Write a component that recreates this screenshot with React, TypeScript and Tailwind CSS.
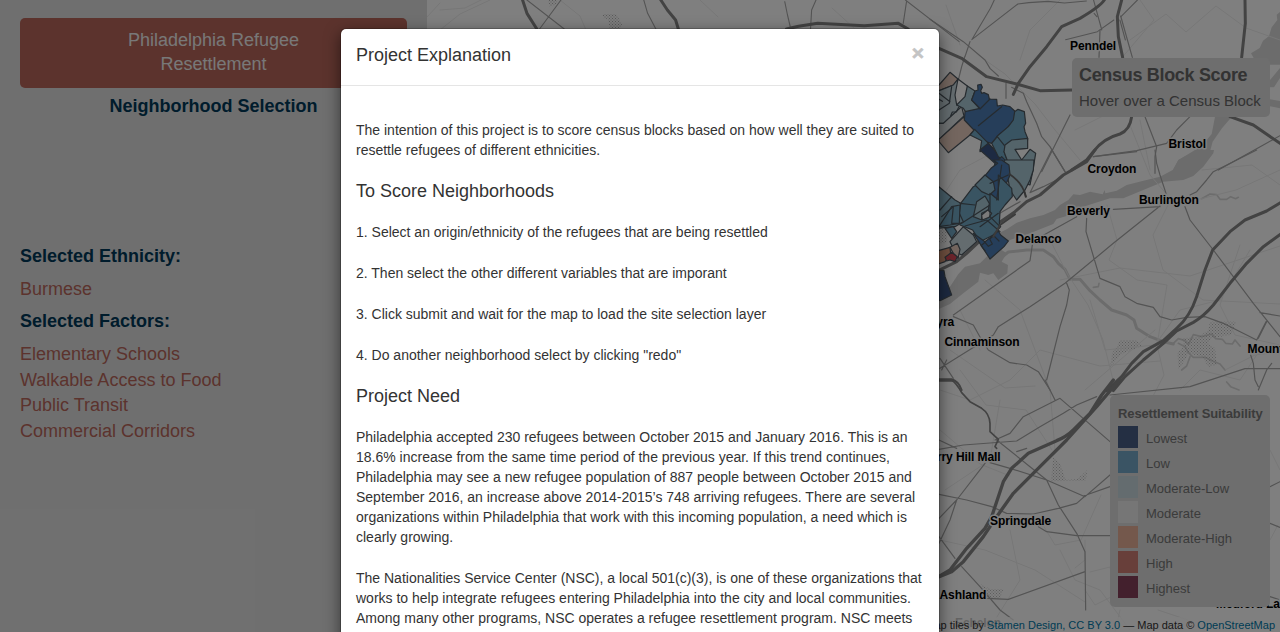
import React from "react";

const factors = ["Elementary Schools", "Walkable Access to Food", "Public Transit", "Commercial Corridors"];

const legend = [
  { label: "Lowest", swatch: "bg-[#485f87]" },
  { label: "Low", swatch: "bg-[#75a9c8]" },
  { label: "Moderate-Low", swatch: "bg-[#c8d8de]" },
  { label: "Moderate", swatch: "bg-[#ececec]" },
  { label: "Moderate-High", swatch: "bg-[#e8b099]" },
  { label: "High", swatch: "bg-[#d07f75]" },
  { label: "Highest", swatch: "bg-[#87405a]" },
];

const places: [string, number, number][] = [
  ["Penndel", 1070, 50],
  ["Bristol", 1168.5, 148],
  ["Croydon", 1087.5, 173],
  ["Burlington", 1139, 204],
  ["Beverly", 1067, 215],
  ["Delanco", 1015.5, 243],
  ["Palmyra", 908, 326],
  ["Cinnaminson", 944.5, 346],
  ["Mount Holly", 1247.5, 353],
  ["Cherry Hill Mall", 914.5, 461],
  ["Springdale", 990, 524.5],
  ["Ashland", 939.5, 599],
  ["Medford Lakes", 1216, 608],
];

const BLUE = "#4c7cb4";
const NAVY = "#3a5484";
const TEAL = "#72a8c4";
const MID = "#8cb8cc";
const LIGHT = "#a8c8d4";
const PALE = "#c8d8de";
const PEACH = "#e8ccbe";

function MapArt() {
  return (
    <svg className="block h-full w-full" viewBox="427 0 853 632" fill="none" strokeLinejoin="round" strokeLinecap="round">
      <defs>
        <pattern id="dots" width="9" height="9" patternUnits="userSpaceOnUse">
          <rect x="0" y="0" width="3" height="3" fill="#bcbcbc" />
          <rect x="4.5" y="4.5" width="3" height="3" fill="#bcbcbc" />
        </pattern>
        <pattern id="dotsSmall" width="3" height="3" patternUnits="userSpaceOnUse">
          <rect x="0" y="0" width="1" height="1" fill="#b4b4b4" />
          <rect x="1.5" y="1.5" width="1" height="1" fill="#b4b4b4" />
        </pattern>
      </defs>
      {/* water */}
      <g fill="#d9d9d9">
        <g transform="translate(930 0) scale(.33333)">
          <path d="M1050 36l-10 8 2 16-17 22-8 26-18 14-10 22-26 16 8 14 4 20h75zM1020 240l12-14 18-22v30l-18 28h-12zM1020 298l30 5v22l-30-6z" />
          <path d="M856 345L845 402 822 430 792 455 745 480 728 515 800 512 838 462 848 425 876 385 910 345z" />
        </g>
        <g transform="translate(930 150) scale(.33333)">
          <path d="M795 0L745 30 728 60 690 80 640 92 590 105 560 122 526 130 524 120 518 133 480 125 450 135 430 133 415 150 390 165 375 180 340 195 300 205 260 218 230 238 195 255 190 300 150 340 105 350 85 372 60 410 20 425V480L60 462 100 430 145 395 150 368 175 375 190 370 205 390 232 370 234 345 215 335 230 310 215 300 240 270 300 250 370 222 380 207 420 195 460 170 540 145 580 145 640 120 700 95 760 90 790 78 820 50 850 10 852 0z" />
        </g>
      </g>
      <g transform="translate(930 150) scale(.33333)" stroke="#d9d9d9">
        <path strokeWidth="9" d="M215 322L235 306 290 300 340 300 370 320 385 340 405 358 420 388 450 388 465 405 480 422 510 450 545 480 590 495 612 510 620 535 660 560 700 575 730 582" />
        <path strokeWidth="5" d="M730 580l15-14 20 6 10 12 15-30 25 6 30-8 12 14 20 2 10 12 20 2 8-12 15 18M745 580l20 10 10 18 15 14 35 0 25 12 20 8 15 18M780 620l-10 28-15 12M815 146l25-14 20 2 10 14 20 0 12-8 15 6 8-4M490 412l15-2 2-10M890 696l12 14 25 10" />
      </g>
      {/* wetlands */}
      <g fill="url(#dots)">
        <path transform="translate(930 150) scale(.33333)" d="M840 515h78l-15 40-60 10-8 18 20 10 5 52-24 5-20-30-40-10-30 50-4-50 20-20-5-25 50-5 28-20zM572 570h45l22 18-50 18-18 10-30 35 5-40z" />
        <path transform="translate(930 380) scale(.33333)" d="M370 232l22 22 15 46 35-2 30-28-5 32-105 2zM150 612l30 15h40l-10 30h-35z" />
        <path transform="translate(930 160) scale(.33333)" d="M27 205c25 5 30 25 20 45h-20z" />
      </g>
      <path fill="url(#dotsSmall)" d="M603 14h13l6 10-2 5h-10l-2-10-5-1zM548 0h10l-3 5-5 2z" />
      {/* local roads */}
      <g stroke="#eeeeee" strokeWidth="1">
        <path d="M427 17l13-14M440 10l25-2 20-10M440 30l20-16 30-14M560 0l20 16 6 14M700 0l18 17M832 8l22 20M960 45l-14-40M1060 0l-30 30-10 30M1130 40l36-26 20 18 30-26 30 22 34 12M1120 60l34-40-14-20M985 60l20 14 30 30 20 26 25 30M1075 130l40-20M1130 125l20 50 26 30 60-15 44-20M940 200l20-30 34-18M960 310l20 40M985 280l35 30 30 80 5 60M1050 240l18 35 20 30 15 35 10 40M1107 205l10 35-8 20 28 20 30 5-10 60 7 30-13 25M1168 205l-15 30 10 35 40 30 77 4M1060 280l60-12 70 8 90-30M1090 300l15 50 50-5 25-35 40-10 30-50M1240 245l-20 60 15 30 45 10M940 390l30 10 40-20 30-30 60 16 60-5M960 370l26 35 40 5 26 40M1000 400l-10 60-45 30M940 540l45 10 50 20 50 32M1010 530l10 50-25 40M1040 520l15 25 26-5 20-45M1060 550l15 30 25 10 30 40M1085 540v20l-10 8M940 430l40 34 30 12M1090 572l20-5 5 28-20 10-10-15M1270 450l10 20M1270 540l8-15M1180 390l20-20 40 10 20-30M1225 370l30-15 25-3M950 350l55 38 30-2M1150 170l-10-50M1202 170l50-5 28 20M1155 330l-70 60M1188 620l-30-10M1120 610l-5 22" />
      </g>
      {/* secondary roads */}
      <g stroke="#a8a8a8" strokeWidth="1.1">
        <g transform="translate(420 0) scale(.5485 .33333)">
          <path vectorEffect="non-scaling-stroke" d="M195 0l68 87M257 0L218 87M408 0l7 40 15 47M665 5l5 40 6 42M722 0l-8 30-2 57M885 0l98 125M887 5l-6 65M1047 0l-7 25-20 55-14 39 84-107 20-4 35-4 30 5 40-6M1229 40l5 10M1228 0l15 90M1265 60l-30 35-58 24M1308 0l-30 50M1276 60l10 60" />
        </g>
        <g transform="translate(930 0) scale(.33333)" strokeWidth="3.6">
          <path d="M105 168L95 200 85 240M0 58L100 125 165 180 180 205 205 228M120 125L105 170M510 90L507 172M572 48L607 172M228 250v45M245 262L280 280 290 305 320 370 335 410 360 440 405 515M420 345L335 515M645 350L680 440 675 470V520M780 350L740 390 710 430 620 452 490 470M865 510L1000 435 1050 407" />
        </g>
        <g transform="translate(930 150) scale(.33333)" strokeWidth="3.6">
          <path d="M490 20L620 5M365 0L300 128 340 110 380 90M365 0L405 65M675 0L680 40 690 75 708 130M980 0L850 65 830 90 800 125 780 135M550 178L690 170M690 168L550 280 405 400 300 470 205 530 190 555 30 655M765 170L780 210 850 300 970 460 1050 560M470 205L468 245 510 385 570 410 585 440 620 460 670 472 690 500 725 510 770 502 825 500 880 520 920 540 980 570 1008 515M410 400L418 420 410 465 390 530 350 690M307 285L300 332 70 495M440 200L305 275M70 500L130 525 155 570 175 600 240 638 290 645 325 665 360 720M1050 498L990 488M1010 515L985 565M962 615L970 640 975 690 985 710M1025 640L1010 660 985 720M1050 656H945L780 710 540 735M200 195L270 155M30 625L70 685M50 630L35 660" />
        </g>
        <g transform="translate(930 380) scale(.33333)" strokeWidth="3.6">
          <path d="M27 208L100 195 260 183 330 140 400 100 440 75 500 50M27 180L80 205M345 0L375 60M195 180L240 160 280 110 390 55 540 185M200 180L300 260 350 300 385 375 440 460 465 515 467 690M180 248L240 265 350 300 460 348 540 320M465 350L540 285M27 415L80 360 165 250M27 343L110 360 185 380 230 400 310 402 385 385 440 370 465 348M80 360L60 420 27 490M325 440L350 455 440 467 540 467M27 470L75 535M95 560L150 620 210 690 250 720M170 655L235 658 465 575M1020 430L1050 442M1020 320L1050 305M1020 650L1050 660M260 215L290 205M150 655H27" />
        </g>
      </g>
      {/* highways */}
      <g stroke="#868686" strokeWidth="3">
        <g transform="translate(420 0) scale(.5485 .33333)">
          <path vectorEffect="non-scaling-stroke" d="M187 0l8 40 18 47M439 0l12 30 15 30 5 27M668 87l22-8 35-9 85 7 62-7 18 17" />
        </g>
        <g transform="translate(930 0) scale(.33333)" strokeWidth="9">
          <path d="M20 142L95 175 170 230 260 252 330 272 427 270M523 0Q510 20 450 55L395 80 350 140 300 200 265 250 250 283M575 0L562 50 565 110 578 172M945 0L946 70 935 172M900 350L970 375 1050 430M605 350Q600 390 570 402 Q520 415 490 455 L470 480 425 510" />
        </g>
        <g transform="translate(930 150) scale(.33333)" strokeWidth="9">
          <path d="M495 0L470 35 400 75 330 135 290 155 255 185 205 220 110 310 80 335 25 362" />
          <path d="M1055 156L1010 183 945 210 900 245 848 300 825 360 800 440Q780 500 740 535L700 572 640 605 605 640 575 680 530 722" />
          <path d="M1055 250L1000 290 950 340 900 400 850 465Q820 500 790 517L740 543 700 580 640 630 585 680 550 722" />
          <path d="M20 688h45q20 5 30 32" strokeWidth="6" />
          <path d="M235 75Q280 100 287 140" strokeWidth="6" />
        </g>
        <g transform="translate(930 380) scale(.33333)" strokeWidth="10">
          <path d="M550 0L515 45 480 100 430 150Q410 170 380 182L295 220 245 265 220 305 205 350 185 410 165 445 110 505 60 570 22 592" />
          <path d="M568 0L500 80 410 180 330 260 250 340 200 410 160 470 100 545 65 575 22 592" />
          <path d="M65 0Q80 10 95 38L120 65 155 85Q178 100 180 130V155L205 178 195 200 200 205" strokeWidth="5" />
          <path d="M27 2H70" strokeWidth="7" />
        </g>
      </g>
      {/* census blocks */}
      <g transform="translate(930 60) scale(.33333)" stroke="#4c565e" strokeWidth="3.6">
        <path fill={PEACH} d="M0 78L27 75 60 37 84 57 70 75 28 92z" />
        <path fill={PALE} d="M20 95L70 75 84 57 75 105 80 135 95 140 40 190 20 190z" />
        <path fill="#dfe4e6" d="M20 190L40 190 95 140 102 168 27 238 20 238z" />
        <path fill={LIGHT} d="M112 78L135 93 125 120 150 147 110 160 100 145 80 135 105 110z" />
        <path d="M84 57L112 78M65 80L58 130 27 150M27 118l10 6M27 100l33 25M62 168l5-12h12l7-14" />
        <path fill={PEACH} d="M27 238L100 172 134 208 120 225 55 278 27 245z" />
        <path fill={BLUE} d="M135 93L144 90 143 75 153 73 157 82 152 92 155 100 162 98 175 104 178 117 200 118 202 138 218 135 240 140 254 153 255 165 250 182 230 205 202 228 185 250 165 245 103 180 105 155 150 145 125 120z" />
        <path d="M150 147L180 117M215 140L145 197" />
        <path fill={TEAL} d="M254 155L264 148 283 155 287 190 282 200 285 215 293 235 290 265 255 268 225 275 200 230 235 200 250 180z" />
        <path fill={TEAL} d="M120 225L134 208 190 265 175 260 150 275 155 242z" />
        <path fill={NAVY} d="M150 270L175 250 225 305 215 330 195 310z" />
        <path fill={TEAL} d="M185 250L202 230 230 265 222 275 235 310 205 290z" />
        <path fill={LIGHT} d="M222 275L225 255 245 240 293 235V265L255 268 275 300 300 268 317 280 308 335 300 375 250 360 215 340 235 310z" />
        <path fill={BLUE} d="M195 310L215 290 235 310 208 345 160 365 190 330z" />
      </g>
      <g transform="translate(930 160) scale(.33333)" stroke="#4c565e" strokeWidth="3.6">
        <path fill={LIGHT} d="M225 0h87l-2 30-10 30-15 30-25 30-20-30-8-45 3-20-15-15z" />
        <path fill={BLUE} d="M190 0h25l22 15 3 30-15 35-20 40-20-15-15-35-15-10 28-35 20-15z" />
        <path fill={TEAL} d="M205 45L245 85 247 110 225 135 210 155 208 190 212 200 190 225 150 245 128 210 90 195 85 165 92 130 130 80 150 70 180 100 205 120z" />
        <path fill={MID} d="M135 75L165 45 190 65 195 90 178 105 155 95z" />
        <path fill={LIGHT} d="M130 170L140 125 165 108 178 130 175 150 155 160 155 180z" />
        <path fill="#f4f4f4" d="M155 165l18-15 12 10-8 12-20 8z" />
        <path fill={MID} d="M20 75L75 120 92 130 88 160 100 185 75 200 20 205z" />
        <path fill={TEAL} d="M27 200L65 140 90 135 88 190 60 195zM45 205l25-5 10 15-15 20z" />
        <path fill={PALE} d="M60 245L100 200 130 225 140 245 95 285 75 275z" />
        <path fill={BLUE} d="M130 220L165 245 205 213 212 225 235 243 222 260 180 297z" />
        <path d="M30 150l35-40M95 190l85-55M90 130l45 5M150 200l55-40M180 70l55-25M180 100l0 70 30 30M215 15L200 120M105 198l65-18 40 35M35 170l35-30-5 50 30 0M165 272l-12-15 12-10 10 12 12-7-8-15 12-10 16 16" />
        <path fill={PEACH} d="M60 262L82 250 90 268 84 295 70 280z" />
        <path fill="#e0a080" d="M25 272L60 262 62 282 45 305 25 312z" />
        <path fill="#d94856" d="M45 292L65 277 82 290 75 305 60 300 50 303z" />
        <path fill={NAVY} d="M20 330L42 332 45 350 65 405 30 422 20 418z" />
        <path stroke="#777777" strokeWidth="6" d="M190 230L210 195 255 163" />
        <path stroke="#666666" strokeWidth="5" d="M238 42Q278 68 288 110" />
      </g>
      <g className="font-['Liberation_Sans',Arial,sans-serif] text-[12px] font-bold tracking-[-0.08px]" fill="#000" stroke="#fff" strokeWidth="3" paintOrder="stroke">
        {places.map(([name, x, y]) => (
          <text key={name} x={x} y={y}>{name}</text>
        ))}
        <text x="955" y="627" fill="#444">Echelon</text>
      </g>
    </svg>
  );
}

export default function App() {
  return (
    <div className="relative h-[632px] w-full overflow-hidden bg-white font-['Liberation_Sans',Arial,sans-serif]">
      <div className="flex h-full">
        <aside className="w-[427px] shrink-0 bg-[#dfdfdf] px-5 pt-[18px] text-[18px] text-[#b8665a]">
          <h1 className="h-[70px] w-[387px] rounded-[5px] bg-[#b8665a] pt-[10px] text-center leading-6 text-[#f0f0f0]">
            Philadelphia Refugee<br />Resettlement
          </h1>
          <h2 className="mt-[6px] h-6 text-center font-bold leading-6 text-[#003858]">Neighborhood Selection</h2>
          <h3 className="mt-[126px] font-bold leading-6 text-[#003858]">Selected Ethnicity:</h3>
          <p className="mt-[9px] leading-6">Burmese</p>
          <h3 className="mt-[8px] font-bold leading-6 text-[#003858]">Selected Factors:</h3>
          <ul className="mt-[9px] leading-[25.7px]">
            {factors.map((f) => (
              <li key={f}>{f}</li>
            ))}
          </ul>
        </aside>
        <main className="relative min-w-0 flex-1 overflow-hidden">
          <MapArt />
          <div className="absolute right-[10px] top-[58px] h-[59px] w-[198px] rounded-[5px] bg-[#dcdcdc] pl-[7px] pt-[6px] text-[#666]">
            <h4 className="text-[18px] font-bold leading-[22px] tracking-[-0.32px]">Census Block Score</h4>
            <p className="mt-[5px] whitespace-nowrap text-[15px] leading-5">Hover over a Census Block</p>
          </div>
          <div className="absolute right-[10px] top-[395px] h-[212px] w-[160px] rounded-[5px] bg-[#dcdcdc] px-2 pt-[9px] text-[13px] text-[#777]">
            <h4 className="whitespace-nowrap font-bold leading-[19px] tracking-[-0.12px]">Resettlement Suitability</h4>
            <ul className="mt-[3px] flex flex-col gap-[3px]">
              {legend.map((row) => (
                <li key={row.label} className="flex h-[22px] items-center gap-2">
                  <span className={`h-[22px] w-5 ${row.swatch}`} />
                  <span className="pt-[3px]">{row.label}</span>
                </li>
              ))}
            </ul>
          </div>
          <div className="absolute bottom-0 right-0 whitespace-nowrap bg-white/70 px-[5px] pt-px text-[11px] leading-[14px] text-[#333]">
            Map tiles by <span className="text-[#0078a8]">Stamen Design, CC BY 3.0</span> — Map data © <span className="text-[#0078a8]">OpenStreetMap</span>
          </div>
        </main>
      </div>
      <div className="absolute inset-0 bg-black/50" />
      <section className="absolute left-[340px] top-[28px] h-[900px] w-[600px] rounded-[6px] border border-black/20 bg-white bg-clip-padding text-[#333] shadow-[0_5px_15px_rgba(0,0,0,0.5)]">
        <header className="flex h-[57px] justify-between border-b border-[#e5e5e5] px-[15px] pt-[13px]">
          <h4 className="text-[18px] leading-[26px]">Project Explanation</h4>
          <button className="h-[21px] text-[21px] font-bold leading-[21px] text-[#c4c4c4] [-webkit-text-stroke:0.6px_#c4c4c4]">×</button>
        </header>
        <div className="flex flex-col gap-[21px] whitespace-nowrap px-[15px] pt-[34px] text-[14px] leading-5">
          <p>The intention of this project is to score census blocks based on how well they are suited to<br />resettle refugees of different ethnicities.</p>
          <h4 className="text-[18px]">To Score Neighborhoods</h4>
          <p>1. Select an origin/ethnicity of the refugees that are being resettled</p>
          <p>2. Then select the other different variables that are imporant</p>
          <p>3. Click submit and wait for the map to load the site selection layer</p>
          <p>4. Do another neighborhood select by clicking "redo"</p>
          <h4 className="text-[18px]">Project Need</h4>
          <p>
            Philadelphia accepted 230 refugees between October 2015 and January 2016. This is an<br />
            18.6% increase from the same time period of the previous year. If this trend continues,<br />
            Philadelphia may see a new refugee population of 887 people between October 2015 and<br />
            September 2016, an increase above 2014-2015’s 748 arriving refugees. There are several<br />
            organizations within Philadelphia that work with this incoming population, a need which is<br />
            clearly growing.
          </p>
          <p>
            The Nationalities Service Center (NSC), a local 501(c)(3), is one of these organizations that<br />
            works to help integrate refugees entering Philadelphia into the city and local communities.<br />
            Among many other programs, NSC operates a refugee resettlement program. NSC meets
          </p>
        </div>
      </section>
    </div>
  );
}
